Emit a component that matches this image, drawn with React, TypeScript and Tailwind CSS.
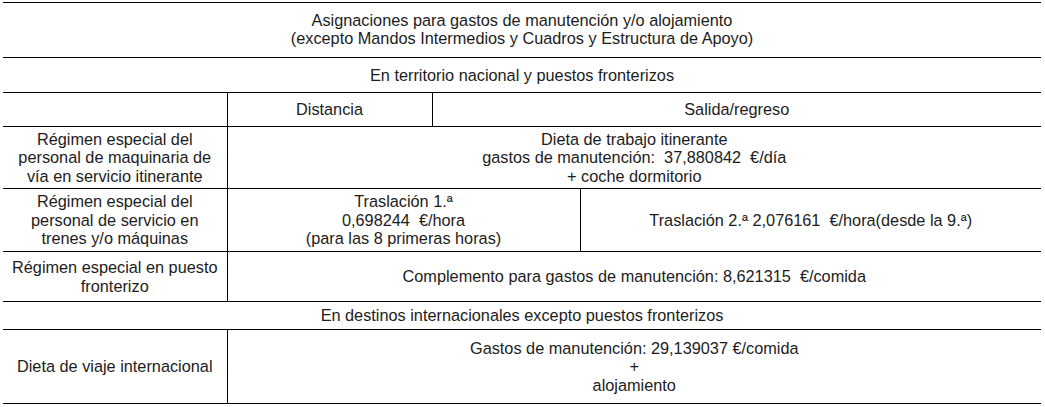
const cell = "border-l border-black text-center align-middle px-1";

export default function App() {
  return (
    <div className="bg-white w-[1045px] h-[407px] pt-[2px] pl-[3px] text-[16.3px] leading-[18.4px] text-[#1c1c1c] font-['Liberation_Sans',Arial,sans-serif]">
      <table className="w-[1038px] border-collapse table-fixed">
        <colgroup>
          <col className="w-[224px]" />
          <col className="w-[205px]" />
          <col className="w-[148px]" />
          <col className="w-[461px]" />
        </colgroup>
        <tbody>
          <tr className="h-[55px] border-y border-black">
            <td colSpan={4} className="text-center align-middle pb-[2px]">
              Asignaciones para gastos de manutención y/o alojamiento
              <br />
              (excepto Mandos Intermedios y Cuadros y Estructura de Apoyo)
            </td>
          </tr>
          <tr className="h-[35px] border-y border-black">
            <td colSpan={4} className="text-center align-middle">
              En territorio nacional y puestos fronterizos
            </td>
          </tr>
          <tr className="h-[34px] border-y border-black">
            <td />
            <td className={cell}>Distancia</td>
            <td colSpan={2} className={cell}>
              Salida/regreso
            </td>
          </tr>
          <tr className="h-[62px] border-y border-black">
            <td className="text-center align-middle px-1">
              Régimen especial del
              <br />
              personal de maquinaria de
              <br />
              vía en servicio itinerante
            </td>
            <td colSpan={3} className={cell + " whitespace-pre"}>
              {"Dieta de trabajo itinerante\ngastos de manutención:  37,880842  €/día\n+ coche dormitorio"}
            </td>
          </tr>
          <tr className="h-[63px] border-y border-black">
            <td className="text-center align-middle px-1">
              Régimen especial del
              <br />
              personal de servicio en
              <br />
              trenes y/o máquinas
            </td>
            <td colSpan={2} className={cell + " whitespace-pre"}>
              {"Traslación 1.ª\n0,698244  €/hora\n(para las 8 primeras horas)"}
            </td>
            <td className={cell + " whitespace-pre"}>
              {"Traslación 2.ª 2,076161  €/hora(desde la 9.ª)"}
            </td>
          </tr>
          <tr className="h-[50px] border-y border-black">
            <td className="text-center align-middle px-1">
              Régimen especial en puesto
              <br />
              fronterizo
            </td>
            <td colSpan={3} className={cell + " whitespace-pre"}>
              {"Complemento para gastos de manutención: 8,621315  €/comida"}
            </td>
          </tr>
          <tr className="h-[28px] border-y border-black">
            <td colSpan={4} className="text-center align-middle">
              En destinos internacionales excepto puestos fronterizos
            </td>
          </tr>
          <tr className="h-[74px] border-y border-black">
            <td className="text-center align-middle px-1">Dieta de viaje internacional</td>
            <td colSpan={3} className={cell}>
              Gastos de manutención: 29,139037 €/comida
              <br />+
              <br />
              alojamiento
            </td>
          </tr>
        </tbody>
      </table>
    </div>
  );
}
